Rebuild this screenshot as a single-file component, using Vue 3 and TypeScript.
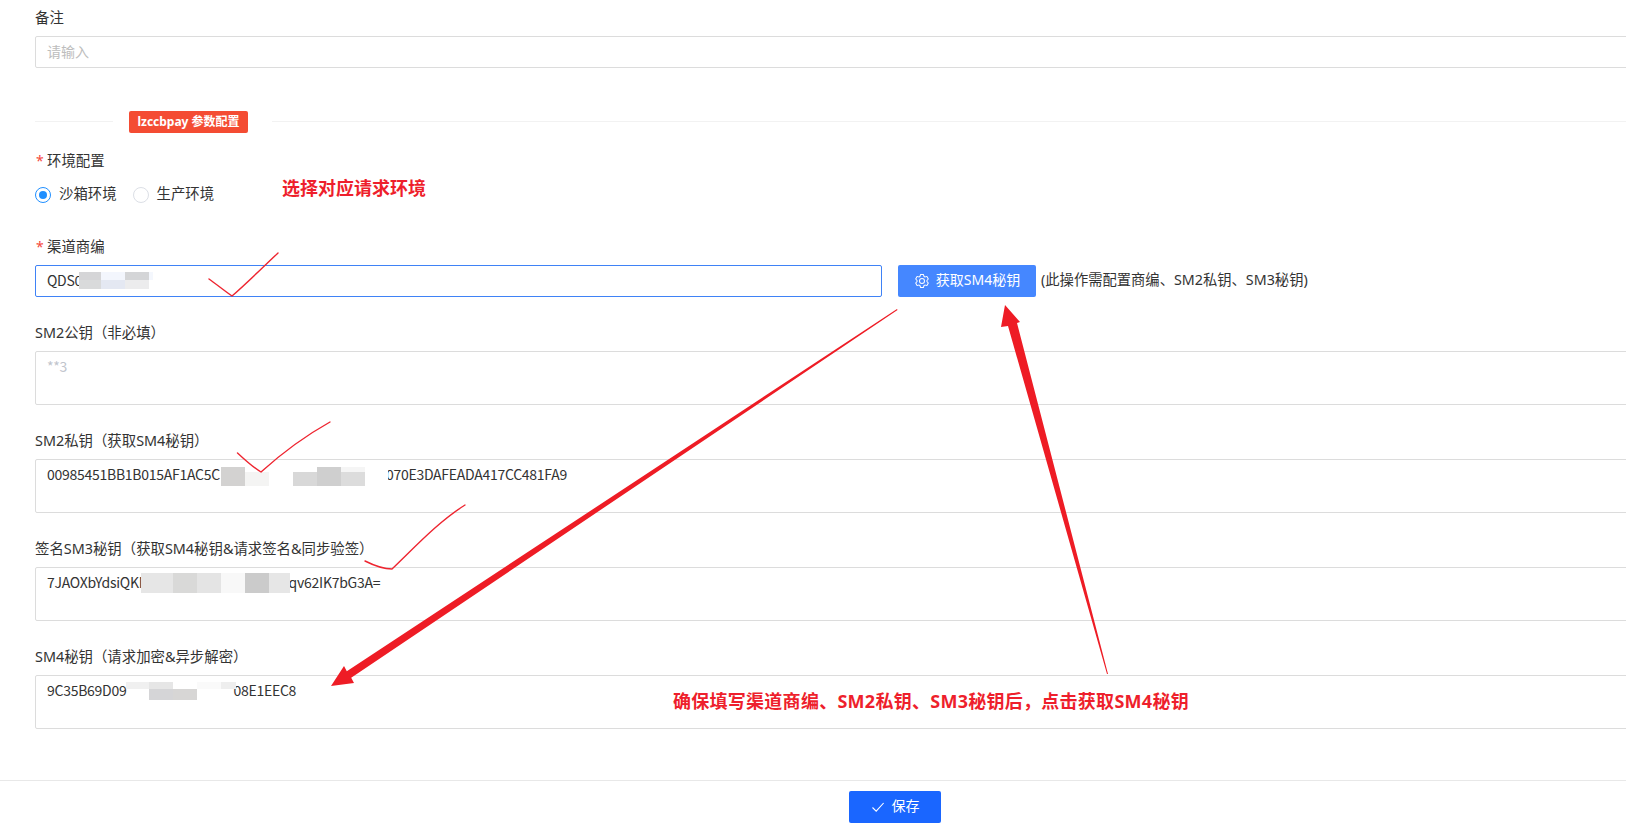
<script setup lang="ts">
const checkPaths: string[] = [
  'M209 279 C216 284 226 292 232 296 C246 284 262 268 278 253',
  'M237.5 453 C245 460 254 468 261 472 C282 453 305 436 330 422',
  'M365 561 C373 565 383 569 392 569 C415 547 438 522 465 505',
]

const mosaics: { x: number; y: number; w: number; h: number; c: string }[] = [
  { x: 79, y: 272, w: 22, h: 8, c: '#d5d5d7' },
  { x: 79, y: 280, w: 22, h: 9, c: '#d9dadb' },
  { x: 101, y: 272, w: 24, h: 8, c: '#f3f6fd' },
  { x: 101, y: 280, w: 24, h: 9, c: '#e4e8f2' },
  { x: 125, y: 272, w: 24, h: 8, c: '#d4d5d7' },
  { x: 125, y: 280, w: 24, h: 9, c: '#ececed' },
  { x: 149, y: 272, w: 4, h: 8, c: '#f4f7fd' },
  { x: 221, y: 467, w: 24, h: 19, c: '#d3d2d1' },
  { x: 245, y: 472, w: 24, h: 14, c: '#f4f4f3' },
  { x: 293, y: 472, w: 24, h: 14, c: '#d8d8d8' },
  { x: 317, y: 467, w: 24, h: 19, c: '#cfcfcf' },
  { x: 341, y: 467, w: 24, h: 5, c: '#f5f5f5' },
  { x: 341, y: 472, w: 24, h: 14, c: '#dcdcdc' },
  { x: 365, y: 467, w: 23, h: 19, c: '#ffffff' },
  { x: 141, y: 573, w: 32, h: 20, c: '#e6e6e6' },
  { x: 173, y: 573, w: 24, h: 20, c: '#d9d9d8' },
  { x: 197, y: 573, w: 24, h: 20, c: '#e4e4e4' },
  { x: 221, y: 573, w: 24, h: 20, c: '#f8f8f8' },
  { x: 245, y: 573, w: 24, h: 20, c: '#cbcbcb' },
  { x: 269, y: 573, w: 21, h: 20, c: '#e6e6e6' },
  { x: 126, y: 682, w: 23, h: 7, c: '#f0f0f0' },
  { x: 149, y: 682, w: 24, h: 7, c: '#e6e6e6' },
  { x: 149, y: 689, w: 24, h: 11, c: '#d5d5d7' },
  { x: 173, y: 689, w: 24, h: 11, c: '#d7d6d5' },
  { x: 197, y: 682, w: 24, h: 7, c: '#fafafa' },
  { x: 221, y: 682, w: 15, h: 7, c: '#eeeeee' },
]
</script>

<template>
  <div class="viewport">
    <div class="page">
      <main class="form">
        <div class="label">备注</div>
        <div class="field placeholder">请输入</div>

        <div class="divider">
          <span class="line line-left"></span>
          <span class="tag">lzccbpay 参数配置</span>
          <span class="line line-right"></span>
        </div>

        <div class="label"><i class="star">*</i>环境配置</div>
        <div class="radios">
          <label class="radio"><span class="circle on"></span><span class="txt">沙箱环境</span></label>
          <label class="radio"><span class="circle"></span><span class="txt">生产环境</span></label>
        </div>

        <div class="label"><i class="star">*</i>渠道商编</div>
        <div class="row">
          <div class="field focused short">QDS0</div>
          <button class="btn-sm4" type="button">
            <svg class="gear" viewBox="0 0 1024 1024" width="16" height="16">
              <path fill="currentColor" d="M600.704 64a32 32 0 0 1 30.464 22.208l35.2 109.376c14.784 7.232 28.928 15.36 42.432 24.512l112.384-24.192a32 32 0 0 1 34.432 15.36L944.32 364.8a32 32 0 0 1-4.032 37.504l-77.12 85.12a357.12 357.12 0 0 1 0 49.024l77.12 85.248a32 32 0 0 1 4.032 37.504l-88.704 153.6a32 32 0 0 1-34.432 15.296L708.8 803.904c-13.44 9.088-27.648 17.28-42.368 24.512l-35.264 109.376A32 32 0 0 1 600.704 960H423.296a32 32 0 0 1-30.464-22.208L357.696 828.48a351.616 351.616 0 0 1-42.56-24.64l-112.32 24.256a32 32 0 0 1-34.432-15.36L79.68 659.2a32 32 0 0 1 4.032-37.504l77.12-85.248a357.12 357.12 0 0 1 0-48.896l-77.12-85.248A32 32 0 0 1 79.68 364.8l88.704-153.6a32 32 0 0 1 34.432-15.296l112.32 24.256c13.568-9.152 27.776-17.408 42.56-24.64l35.2-109.312A32 32 0 0 1 423.232 64H600.64zm-23.424 64H446.72l-36.352 113.088-24.512 11.968a294.113 294.113 0 0 0-34.816 20.096l-22.656 15.36-116.224-25.088-65.28 113.152 79.68 88.192-1.92 27.136a293.12 293.12 0 0 0 0 40.192l1.92 27.136-79.808 88.192 65.344 113.152 116.224-25.024 22.656 15.296a294.113 294.113 0 0 0 34.816 20.096l24.512 11.968L446.72 896h130.688l36.48-113.152 24.448-11.904a288.282 288.282 0 0 0 34.752-20.096l22.592-15.296 116.288 25.024 65.28-113.152-79.744-88.192 1.92-27.136a293.12 293.12 0 0 0 0-40.256l-1.92-27.136 79.808-88.128-65.344-113.152-116.288 24.96-22.592-15.232a287.616 287.616 0 0 0-34.752-20.096l-24.448-11.904L577.344 128zM512 320a192 192 0 1 1 0 384 192 192 0 0 1 0-384zm0 64a128 128 0 1 0 0 256 128 128 0 0 0 0-256z" />
            </svg>
            <span class="txt">获取SM4秘钥</span>
          </button>
          <span class="hint">(此操作需配置商编、SM2私钥、SM3秘钥)</span>
        </div>

        <div class="label gap">SM2公钥（非必填）</div>
        <div class="area muted">**3</div>

        <div class="label gap">SM2私钥（获取SM4秘钥）</div>
        <div class="area">00985451BB1B015AF1AC5C<span class="hide h1"></span>070E3DAFEADA417CC481FA9</div>

        <div class="label gap">签名SM3秘钥（获取SM4秘钥&amp;请求签名&amp;同步验签）</div>
        <div class="area">7JAOXbYdsiQKN<span class="hide h2"></span>qv62IK7bG3A=</div>

        <div class="label gap">SM4秘钥（请求加密&amp;异步解密）</div>
        <div class="area">9C35B69D09<span class="hide h3"></span>08E1EEC8</div>
      </main>

      <footer class="footer">
        <button class="btn-save" type="button">
          <svg viewBox="0 0 14 14" width="14" height="14" fill="none" stroke="currentColor" stroke-width="1.1">
            <path d="M1.5 7.5 L5.2 11.2 L12.6 3" />
          </svg>
          <span class="txt">保存</span>
        </button>
      </footer>
    </div>

    <div
      v-for="(m, i) in mosaics"
      :key="i"
      class="mosaic"
      :style="{ left: m.x + 'px', top: m.y + 'px', width: m.w + 'px', height: m.h + 'px', background: m.c }"
    ></div>

    <svg class="marks" width="1626" height="827" viewBox="0 0 1626 827">
      <path v-for="(d, i) in checkPaths" :key="i" :d="d" fill="none" stroke="#ee2530" stroke-width="1.4" stroke-linecap="round" stroke-linejoin="round" />
      <polygon fill="#ee1c25" points="897,309 897.5,310 351.2,677.8 354,683 331,686 344,666 346.8,671.2" />
      <polygon fill="#ee1c25" points="1005,305 1020,322 1017,323 1108,674 1107,674 1008,326 1001,327" />
    </svg>

    <div class="note note-a">选择对应请求环境</div>
    <div class="note note-b">确保填写渠道商编、SM2私钥、SM3秘钥后，点击获取SM4秘钥</div>
  </div>
</template>

<style scoped>
.viewport {
  position: relative;
  width: 1626px;
  height: 827px;
  overflow: hidden;
  background: #fff;
  font-family: "Noto Sans", "Noto Sans CJK SC", sans-serif;
  font-size: 14px;
  color: #333;
}
.page {
  width: 1790px;
  height: 827px;
  display: flex;
  flex-direction: column;
}
.form {
  flex: 1;
  padding: 6px 0 0 35px;
}
.label {
  height: 22px;
  box-sizing: border-box;
  line-height: 20px;
  padding-top: 2px;
  margin-bottom: 8px;
  display: flex;
  align-items: center;
  font-size: 14.4px;
}
.label.gap {
  margin-top: 24px;
}
.star {
  width: 12px;
  color: #f5483b;
  font-style: normal;
  font-size: 14px;
  padding-left: 1px;
  box-sizing: border-box;
}
.field {
  height: 32px;
  line-height: 28px;
  box-sizing: border-box;
  border: 1px solid #dcdcdc;
  border-radius: 2px;
  padding: 0 11px;
  font-family: "Noto Sans CJK SC", sans-serif;
  letter-spacing: -0.27px;
}
.placeholder {
  color: #bdbdbd;
  letter-spacing: 0;
}
.short {
  width: 847px;
}
.focused {
  border-color: #3f82f6;
}
.divider {
  display: flex;
  align-items: center;
  margin-top: 43px;
  margin-bottom: 16px;
}
.line {
  height: 1px;
  margin-bottom: 2px;
  background: #f2f2f2;
}
.line-left {
  width: 78px;
}
.line-right {
  flex: 1;
}
.tag {
  height: 22px;
  line-height: 21px;
  width: 119px;
  margin: 0 24px 0 16px;
  text-align: center;
  background: #f44c33;
  color: #fff;
  font-size: 12px;
  font-weight: 700;
  border-radius: 2px;
}
.radios {
  display: flex;
  gap: 16px;
  height: 32px;
  align-items: center;
  margin-bottom: 24px;
  font-size: 14.4px;
}
.radio {
  display: flex;
  align-items: center;
  gap: 8px;
}
.txt {
  line-height: 20px;
  padding-bottom: 2px;
}
.circle {
  width: 16px;
  height: 16px;
  box-sizing: border-box;
  border: 1px solid #dcdfe6;
  border-radius: 50%;
  display: flex;
  align-items: center;
  justify-content: center;
}
.circle.on {
  border-color: #1f8fff;
}
.circle.on::after {
  content: "";
  width: 8px;
  height: 8px;
  border-radius: 50%;
  background: #1f8fff;
}
.row {
  display: flex;
  align-items: center;
}
.btn-sm4 {
  margin-left: 16px;
  width: 138px;
  height: 32px;
  border: 0;
  border-radius: 2px;
  background: #4587ff;
  color: #fff;
  font: inherit;
  display: flex;
  align-items: center;
  justify-content: center;
  gap: 6px;
  padding: 0;
}
.hint {
  margin-left: 5px;
  font-size: 14.3px;
  line-height: 20px;
  padding-bottom: 2px;
}
.area {
  height: 54px;
  box-sizing: border-box;
  border: 1px solid #dcdcdc;
  border-radius: 2px;
  padding: 3px 11px;
  line-height: 22px;
  white-space: pre;
  font-family: "Noto Sans CJK SC", sans-serif;
  letter-spacing: -0.27px;
}
.muted {
  color: #c0c4cc;
}
.hide {
  display: inline-block;
  height: 1px;
}
.h1 {
  width: 166px;
}
.h2 {
  width: 140px;
}
.h3 {
  width: 107px;
}
.footer {
  height: 47px;
  box-sizing: border-box;
  border-top: 1px solid #e8e8e8;
  padding-top: 10px;
  display: flex;
  justify-content: center;
}
.btn-save {
  width: 92px;
  height: 32px;
  border: 0;
  border-radius: 2px;
  background: #1a66ff;
  color: #fff;
  font: inherit;
  display: flex;
  align-items: center;
  justify-content: center;
  gap: 7px;
  padding: 0;
}
.mosaic {
  position: absolute;
}
.marks {
  position: absolute;
  left: 0;
  top: 0;
  pointer-events: none;
}
.note {
  position: absolute;
  color: #ee1f2c;
  font-size: 18px;
  font-weight: 700;
  line-height: 24px;
  white-space: nowrap;
}
.note-a {
  left: 282px;
  top: 176px;
}
.note-b {
  left: 673px;
  top: 689px;
  letter-spacing: 0.27px;
}
</style>
